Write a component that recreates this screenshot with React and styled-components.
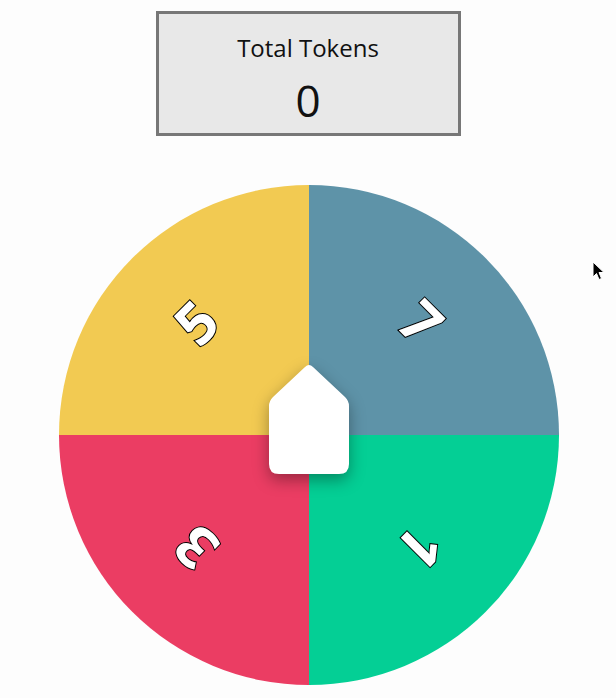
import React from "react";
import styled, { createGlobalStyle } from "styled-components";

const GlobalStyle = createGlobalStyle`
  body {
    margin: 0;
    background: #fdfdfd;
    font-family: "Open Sans", "Noto Sans", sans-serif;
  }
`;

const segments = [
  { id: "tl", value: 5, color: "#f2ca52", angle: -45 },
  { id: "tr", value: 7, color: "#5e93a8", angle: 45 },
  { id: "bl", value: 3, color: "#eb3d63", angle: -135 },
  { id: "br", value: 1, color: "#04cf95", angle: 135 },
];

const pads = {
  tl: "24px 0 0 24px",
  tr: "24px 24px 0 0",
  bl: "0 0 24px 24px",
  br: "0 24px 24px 0",
};

const App = () => {
  return (
    <StPage>
      <GlobalStyle />
      <StTokenBox>
        <StTokenLabel>Total Tokens</StTokenLabel>
        <StTokenValue>0</StTokenValue>
      </StTokenBox>
      <StWheelWrap>
        <StWheel>
          {segments.map((seg) => (
            <StQuarter key={seg.id} $color={seg.color} $pad={pads[seg.id]}>
              <StNumber $angle={seg.angle}>{seg.value}</StNumber>
            </StQuarter>
          ))}
        </StWheel>
        <StPointer width="80" height="110" viewBox="0 0 80 110">
          <path
            d="M36 3 Q40 -1 44 3 L76 33 Q80 37 80 42 L80 100 Q80 110 70 110 L10 110 Q0 110 0 100 L0 42 Q0 37 4 33 Z"
            fill="#fff"
          />
        </StPointer>
      </StWheelWrap>
      <StCursor width="13" height="20" viewBox="0 0 13 20">
        <path
          d="M1 1 L1 16 L4.5 12.5 L7 18.5 L9.5 17.5 L7 11.5 L12 11.5 Z"
          fill="#000"
          stroke="#fff"
          strokeWidth="1"
        />
      </StCursor>
    </StPage>
  );
};

export default App;

const StPage = styled.div`
  position: relative;
  display: flex;
  flex-direction: column;
  align-items: center;
  padding-top: 11px;
  min-height: 687px;
`;

const StTokenBox = styled.div`
  width: 299px;
  height: 119px;
  box-sizing: content-box;
  border: 3px solid #777;
  background: #e8e8e8;
  display: flex;
  flex-direction: column;
  align-items: center;
  color: #111;
`;

const StTokenLabel = styled.div`
  font-size: 24px;
  line-height: 30px;
  margin-top: 19px;
`;

const StTokenValue = styled.div`
  font-size: 44px;
  line-height: 50px;
  margin-top: 12px;
`;

const StWheelWrap = styled.div`
  position: relative;
  margin-top: 49px;
  margin-left: 2px;
`;

const StWheel = styled.div`
  width: 500px;
  height: 500px;
  border-radius: 50%;
  overflow: hidden;
  display: grid;
  grid-template-columns: 1fr 1fr;
  grid-template-rows: 1fr 1fr;
`;

const StQuarter = styled.div`
  background: ${({ $color }) => $color};
  display: flex;
  align-items: center;
  justify-content: center;
  padding: ${({ $pad }) => $pad};
`;

const StNumber = styled.span`
  font-size: 58px;
  line-height: 1;
  font-weight: 700;
  color: #fff;
  -webkit-text-stroke: 2px #000;
  paint-order: stroke fill;
  transform: rotate(${({ $angle }) => $angle}deg);
`;

const StPointer = styled.svg`
  position: absolute;
  left: 50%;
  top: 50%;
  margin-left: -40px;
  margin-top: -71px;
  overflow: visible;
  filter: drop-shadow(0 6px 8px rgba(0, 0, 0, 0.35));
`;

const StCursor = styled.svg`
  position: absolute;
  left: 592px;
  top: 261px;
`;
